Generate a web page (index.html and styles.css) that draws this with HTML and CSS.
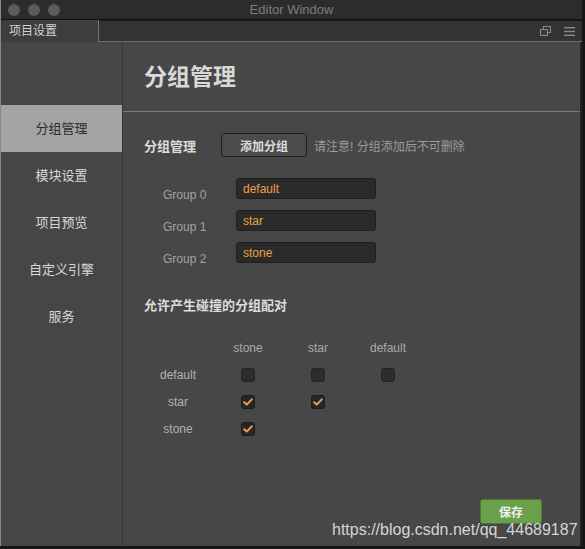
FILE: index.html
```html
<!DOCTYPE html>
<html lang="zh-CN">
<head>
    <meta charset="UTF-8">
    <title>Editor Window</title>
    <link rel="stylesheet" href="styles.css">
</head>
<body>
    <div class="window">
        <div class="titlebar">
            <div class="lights">
                <span class="light"></span>
                <span class="light"></span>
                <span class="light"></span>
            </div>
            <div class="title">Editor Window</div>
        </div>

        <div class="tabbar">
            <div class="tab">项目设置</div>
            <div class="tab-rest">
                <svg class="tab-icon" width="11" height="10" viewBox="0 0 11 10">
                    <rect x="3.5" y="0.5" width="7" height="6" fill="none" stroke="#8a8a8a"/>
                    <rect x="0.5" y="3.5" width="7" height="6" fill="#3a3a3a" stroke="#8a8a8a"/>
                </svg>
                <svg class="tab-icon" width="11" height="9" viewBox="0 0 11 9">
                    <rect x="0" y="0" width="11" height="1.4" fill="#8a8a8a"/>
                    <rect x="0" y="3.8" width="11" height="1.4" fill="#8a8a8a"/>
                    <rect x="0" y="7.6" width="11" height="1.4" fill="#8a8a8a"/>
                </svg>
            </div>
        </div>

        <div class="content">
            <div class="sidebar">
                <div class="nav-item active">分组管理</div>
                <div class="nav-item">模块设置</div>
                <div class="nav-item">项目预览</div>
                <div class="nav-item">自定义引擎</div>
                <div class="nav-item">服务</div>
            </div>

            <div class="panel">
                <div class="panel-header">分组管理</div>

                <div class="panel-body">
                    <div class="add-row">
                        <span class="section-title">分组管理</span>
                        <button class="btn">添加分组</button>
                        <span class="hint">请注意! 分组添加后不可删除</span>
                    </div>

                    <div class="groups">
                        <div class="group-row">
                            <span class="group-label">Group 0</span>
                            <div class="group-input">default</div>
                        </div>
                        <div class="group-row">
                            <span class="group-label">Group 1</span>
                            <div class="group-input">star</div>
                        </div>
                        <div class="group-row">
                            <span class="group-label">Group 2</span>
                            <div class="group-input">stone</div>
                        </div>
                    </div>

                    <div class="section-title pairs-title">允许产生碰撞的分组配对</div>

                    <div class="matrix">
                        <span></span>
                        <span class="col-head">stone</span>
                        <span class="col-head">star</span>
                        <span class="col-head">default</span>

                        <span class="row-head">default</span>
                        <span class="cell"><span class="check"></span></span>
                        <span class="cell"><span class="check"></span></span>
                        <span class="cell"><span class="check"></span></span>

                        <span class="row-head">star</span>
                        <span class="cell"><span class="check on"><svg width="10" height="8" viewBox="0 0 10 8"><path d="M1.2 4.2 L3.8 6.6 L8.8 1.4" fill="none" stroke="#f0a04c" stroke-width="2" stroke-linecap="round" stroke-linejoin="round"/></svg></span></span>
                        <span class="cell"><span class="check on"><svg width="10" height="8" viewBox="0 0 10 8"><path d="M1.2 4.2 L3.8 6.6 L8.8 1.4" fill="none" stroke="#f0a04c" stroke-width="2" stroke-linecap="round" stroke-linejoin="round"/></svg></span></span>
                        <span class="cell"></span>

                        <span class="row-head">stone</span>
                        <span class="cell"><span class="check on"><svg width="10" height="8" viewBox="0 0 10 8"><path d="M1.2 4.2 L3.8 6.6 L8.8 1.4" fill="none" stroke="#f0a04c" stroke-width="2" stroke-linecap="round" stroke-linejoin="round"/></svg></span></span>
                        <span class="cell"></span>
                        <span class="cell"></span>
                    </div>
                </div>

                <button class="btn-save">保存</button>
            </div>
        </div>

        <div class="watermark">https://blog.csdn.net/qq_44689187</div>
    </div>
</body>
</html>
```

FILE: styles.css
```css
body, html {
    margin: 0;
    height: 100%;
    background-color: #161616;
    font-family: "Liberation Sans", "Noto Sans CJK SC", sans-serif;
    overflow: hidden;
}

.window {
    position: relative;
    width: 582px;
    height: 546px;
    display: flex;
    flex-direction: column;
    background-color: #474747;
    border-left: 1px solid #8a8a8a;
    box-sizing: border-box;
}

/* title bar with the three window buttons */
.titlebar {
    flex-shrink: 0;
    height: 19px;
    display: flex;
    align-items: center;
    position: relative;
    background-color: #2c2c2d;
    border-bottom: 1px solid #111;
}

.lights {
    display: flex;
    gap: 8px;
    padding-left: 7px;
}

.light {
    width: 12px;
    height: 12px;
    border-radius: 50%;
    background-color: #5b5b5c;
}

.title {
    position: absolute;
    left: 0;
    right: 0;
    text-align: center;
    font-size: 13px;
    color: #7c7c7c;
}

.tabbar {
    flex-shrink: 0;
    height: 22px;
    display: flex;
    background-color: #333334;
}

.tab {
    width: 89px;
    padding-left: 8px;
    line-height: 23px;
    font-size: 12px;
    color: #d2d2d2;
    background-color: #3d3d3d;
    border-right: 1px solid #777;
}

.tab-rest {
    flex: 1;
    display: flex;
    justify-content: flex-end;
    align-items: center;
    gap: 13px;
    padding-right: 7px;
    border-bottom: 1px solid #6c6c6c;
    border-top: 1px solid #1a1a1a;
}

/* body: nav list on the left, settings on the right */
.content {
    flex: 1;
    min-height: 0;
    display: flex;
}

.sidebar {
    width: 121px;
    padding-top: 63px;
    background-color: #464646;
    border-right: 1px solid #363636;
}

.nav-item {
    height: 47px;
    line-height: 47px;
    text-align: center;
    font-size: 13px;
    color: #d8d8d8;
}

.nav-item.active {
    background-color: #a4a4a4;
    color: #2c2c2c;
}

.panel {
    flex: 1;
    display: flex;
    flex-direction: column;
    background-color: #474747;
    border-right: 2px solid #222;
}

.panel-header {
    flex-shrink: 0;
    height: 69px;
    line-height: 70px;
    padding-left: 21px;
    font-size: 23px;
    font-weight: bold;
    color: #d9d9d9;
    border-bottom: 1px solid #7a7a7a;
}

.panel-body {
    padding: 21px 0 0 21px;
}

.section-title {
    font-size: 13px;
    font-weight: bold;
    color: #dcdcdc;
}

.add-row {
    display: flex;
    align-items: center;
    height: 24px;
}

.btn {
    margin-left: 25px;
    width: 86px;
    height: 24px;
    font-family: inherit;
    font-size: 12px;
    font-weight: bold;
    color: #dedede;
    background-color: #4b4b4b;
    border: 1px solid #1e1e1e;
    border-radius: 3px;
}

.hint {
    margin-left: 7px;
    font-size: 12px;
    color: #9c9c9c;
}

.groups {
    display: flex;
    flex-direction: column;
    gap: 11px;
    padding: 21px 0 0 19px;
}

.group-row {
    display: flex;
    height: 21px;
}

.group-label {
    width: 73px;
    padding-top: 10px;
    font-size: 12px;
    color: #a2a2a2;
}

.group-input {
    width: 132px;
    height: 19px;
    line-height: 20px;
    padding-left: 6px;
    font-size: 12px;
    color: #f0a04c;
    background-color: #2a2a2a;
    border: 1px solid #1f1f1f;
    border-radius: 3px;
}

.pairs-title {
    margin-top: 35px;
    line-height: 15px;
}

/* collision pair matrix */
.matrix {
    display: grid;
    grid-template-columns: repeat(4, 70px);
    grid-auto-rows: 27px;
    margin: 21px 0 0 -1px;
    align-items: center;
}

.col-head, .row-head {
    text-align: center;
    font-size: 12px;
    color: #a9a9a9;
}

.row-head {
    color: #b2b2b2;
}

.cell {
    display: flex;
    justify-content: center;
}

.check {
    width: 14px;
    height: 14px;
    display: flex;
    align-items: center;
    justify-content: center;
    background-color: #2c2c2c;
    border: 1px solid #242424;
    border-radius: 3px;
    box-sizing: border-box;
}

.check.on {
    background-color: #262626;
    border-color: #1a1a1a;
}

.btn-save {
    flex-shrink: 0;
    margin: auto 38px 22px auto;
    width: 62px;
    height: 25px;
    font-family: inherit;
    font-size: 12px;
    font-weight: bold;
    color: #f2f2f2;
    background-color: #6aa04a;
    border: 1px solid #4c7a33;
    border-radius: 3px;
}

.watermark {
    position: absolute;
    left: 331px;
    top: 521px;
    font-size: 16px;
    color: rgba(240, 240, 240, 0.85);
}
```
